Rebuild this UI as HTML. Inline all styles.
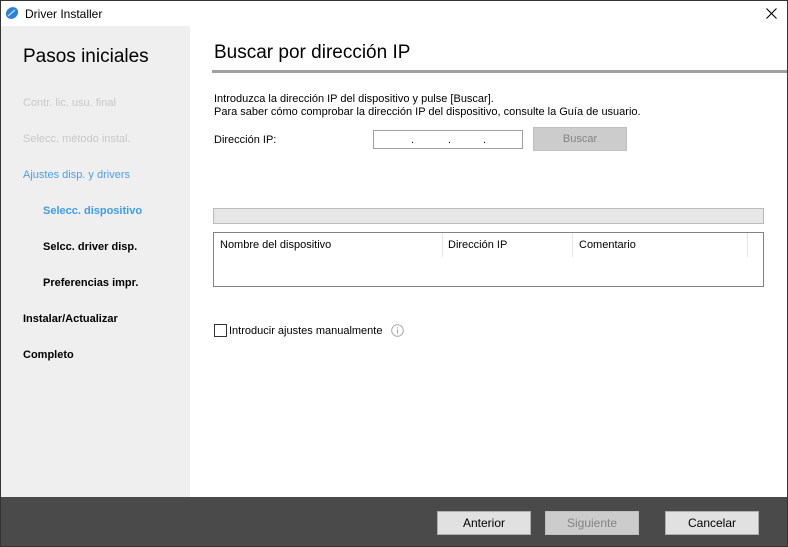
<!DOCTYPE html>
<html><head><meta charset="utf-8"><style>
*{margin:0;padding:0;box-sizing:border-box}
body{width:788px;height:547px;background:#fff;font-family:"Liberation Sans",sans-serif;font-size:12px;color:#000;position:relative;overflow:hidden}
.frame{position:absolute;left:0;top:0;width:788px;height:547px;border:1px solid #333}
.abs{position:absolute;white-space:nowrap}
.side{position:absolute;left:1px;top:26px;width:189px;height:471px;background:#efefef}
.bottom{position:absolute;left:1px;top:497px;width:786px;height:49px;background:#4a4a4a}
.btn{position:absolute;top:511px;height:24px;width:94px;background:#e1e1e1;border:1px solid #adadad;text-align:center;line-height:23px;font-size:12px}
</style></head><body>
<div class="frame"></div>
<svg class="abs" style="left:5px;top:6px" width="14" height="14" viewBox="0 0 14 14"><ellipse cx="7" cy="7" rx="6.5" ry="5.5" transform="rotate(-40 7 7)" fill="#2e7fd6"/><path d="M3 10 L10 4" stroke="#bfe0ff" stroke-width="1.2"/></svg>
<div class="abs" style="left:25px;top:7px;font-size:12px">Driver Installer</div>
<svg class="abs" style="left:766px;top:8px" width="11" height="11" viewBox="0 0 11 11"><path d="M0.5 0.5L10.5 10.5M10.5 0.5L0.5 10.5" stroke="#000" stroke-width="1.1"/></svg>
<div class="side"></div>
<div class="abs" style="left:23px;top:46px;font-size:19px">Pasos iniciales</div>
<div class="abs" style="left:23px;top:97px;font-size:11px;color:#c8c8c8">Contr. lic. usu. final</div>
<div class="abs" style="left:23px;top:133px;font-size:11px;color:#c8c8c8">Selecc. método instal.</div>
<div class="abs" style="left:23px;top:169px;font-size:11px;color:#4a9ef0">Ajustes disp. y drivers</div>
<div class="abs" style="left:43px;top:205px;font-size:11px;font-weight:bold;color:#3d9bf2">Selecc. dispositivo</div>
<div class="abs" style="left:43px;top:241px;font-size:11px;font-weight:bold">Selcc. driver disp.</div>
<div class="abs" style="left:43px;top:277px;font-size:11px;font-weight:bold">Preferencias impr.</div>
<div class="abs" style="left:23px;top:313px;font-size:11px;font-weight:bold">Instalar/Actualizar</div>
<div class="abs" style="left:23px;top:349px;font-size:11px;font-weight:bold">Completo</div>

<div class="abs" style="left:214px;top:42px;font-size:19px">Buscar por dirección IP</div>
<div class="abs" style="left:212px;top:70px;width:575px;height:3px;background:#a0a0a0"></div>
<div class="abs" style="left:214px;top:93px;font-size:11px">Introduzca la dirección IP del dispositivo y pulse [Buscar].</div>
<div class="abs" style="left:214px;top:106px;font-size:11px">Para saber cómo comprobar la dirección IP del dispositivo, consulte la Guía de usuario.</div>
<div class="abs" style="left:214px;top:134px;font-size:11px">Dirección IP:</div>
<div class="abs" style="left:373px;top:130px;width:150px;height:19px;border:1px solid #a0a0a0;background:#fff"></div>
<div class="abs" style="left:411px;top:134px;font-size:11px">.</div>
<div class="abs" style="left:448px;top:134px;font-size:11px">.</div>
<div class="abs" style="left:483px;top:134px;font-size:11px">.</div>
<div class="abs" style="left:533px;top:127px;width:94px;height:24px;background:#cccccc;border:1px solid #bfbfbf;color:#838383;text-align:center;line-height:23px;font-size:11px">Buscar</div>

<div class="abs" style="left:213px;top:208px;width:551px;height:16px;background:#e6e6e6;border:1px solid #bcbcbc"></div>
<div class="abs" style="left:213px;top:232px;width:551px;height:55px;border:1px solid #828282;background:#fff"></div>
<div class="abs" style="left:442px;top:233px;width:1px;height:24px;background:#e5e5e5"></div>
<div class="abs" style="left:572px;top:233px;width:1px;height:24px;background:#e5e5e5"></div>
<div class="abs" style="left:747px;top:233px;width:1px;height:24px;background:#e5e5e5"></div>
<div class="abs" style="left:220px;top:239px;font-size:11px">Nombre del dispositivo</div>
<div class="abs" style="left:448px;top:239px;font-size:11px">Dirección IP</div>
<div class="abs" style="left:579px;top:239px;font-size:11px">Comentario</div>

<div class="abs" style="left:214px;top:324px;width:13px;height:13px;border:1px solid #333;background:#fff"></div>
<div class="abs" style="left:229px;top:325px;font-size:11px">Introducir ajustes manualmente</div>
<svg class="abs" style="left:391px;top:324px" width="13" height="13" viewBox="0 0 13 13"><circle cx="6.5" cy="6.5" r="5.8" fill="none" stroke="#a8a8a8"/><rect x="6" y="5.5" width="1.1" height="4.2" fill="#a8a8a8"/><rect x="6" y="3.3" width="1.1" height="1.1" fill="#a8a8a8"/></svg>

<div class="bottom"></div>
<div class="btn" style="left:437px">Anterior</div>
<div class="btn" style="left:545px;background:#cccccc;border-color:#bfbfbf;color:#838383">Siguiente</div>
<div class="btn" style="left:665px">Cancelar</div>
</body></html>
